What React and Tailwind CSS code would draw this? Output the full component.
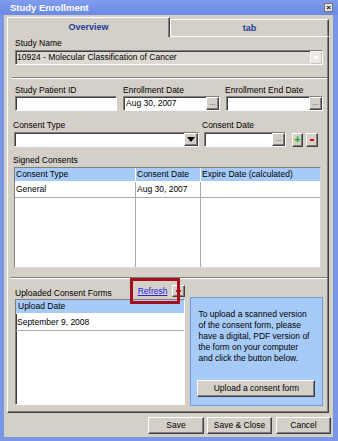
import React from 'react';

const raised =
  'bg-[#d4d0c8] border border-t-white border-l-white border-r-[#404040] border-b-[#404040] shadow-[inset_-1px_-1px_0_#808080]';
const sunken =
  'border border-t-[#808080] border-l-[#808080] border-r-white border-b-white shadow-[inset_1px_1px_0_#404040]';

const DotsButton = () => (
  <div className={`${raised} w-[13px] h-full flex items-center justify-center text-[7px] text-[#333]`}>
    <span className="-mt-[3px]">...</span>
  </div>
);

const DateField = ({ value, className = '' }) => (
  <div className={`${sunken} h-[15px] bg-white flex items-stretch ${className}`}>
    <div className="flex-1 flex items-center pl-[2px]">{value}</div>
    <DotsButton />
  </div>
);

const Label = ({ children, className = '' }) => (
  <div className={`flex items-center ${className}`}>{children}</div>
);

const Separator = ({ className = '' }) => (
  <div className={`h-[2px] border-t border-[#808080] border-b border-b-white ${className}`} />
);

const Button = ({ children, className = '' }) => (
  <div className={`${raised} h-[17px] flex items-center justify-center ${className}`}>{children}</div>
);

const SignedConsents = () => {
  const cols = 'grid grid-cols-[121px_65px_1fr]';
  return (
    <div className="-ml-[1px] w-[307px] h-[101px] bg-white border border-[#808080] border-r-[#d8d8d8] border-b-[#d8d8d8] flex flex-col">
      <div className={`${cols} h-[14px] bg-[#a6cbf8] border-b border-white`}>
        <div className="flex items-center pl-[1px] border-r border-white">Consent Type</div>
        <div className="flex items-center pl-[1px] border-r border-white">Consent Date</div>
        <div className="flex items-center pl-[1px]">Expire Date (calculated)</div>
      </div>
      <div className={`${cols} h-[16px] border-b border-[#a8a8a8]`}>
        <div className="flex items-center pl-[1px] border-r border-[#a8a8a8]">General</div>
        <div className="flex items-center pl-[1px] border-r border-[#a8a8a8]">Aug 30, 2007</div>
        <div />
      </div>
      <div className={`${cols} flex-1`}>
        <div className="border-r border-[#a8a8a8]" />
        <div className="border-r border-[#a8a8a8]" />
        <div />
      </div>
    </div>
  );
};

const UploadedForms = () => (
  <div className="relative flex">
    <div className="w-[171px] flex flex-col">
      <div className="h-[20px] flex items-end">
        <span className="pb-[2px]">Uploaded Consent Forms</span>
        <div className="ml-auto flex items-center gap-[5px] mb-[2px]">
          <span className="text-[#2424e0] underline font-['Liberation_Sans',Arial,sans-serif]">Refresh</span>
          <div className={`${raised} w-[13px] h-[12px] flex items-center justify-center`}>
            <div className="w-[5px] h-[2px] bg-[#e01010]" />
          </div>
        </div>
      </div>
      <div className={`${sunken} h-[106px] bg-white flex flex-col`}>
        <div className="h-[14px] bg-[#a6cbf8] flex items-center pl-[2px] border-b border-white">Upload Date</div>
        <div className="h-[17px] flex items-center pl-[1px] border-b border-[#a8a8a8]">September 9, 2008</div>
      </div>
    </div>
    <div className="ml-[5px] mt-[18px] w-[133px] h-[109px] bg-[#a6cbf8] border border-[#6f9ce0] flex flex-col">
      <div className="pt-[11px] pl-[7px] leading-[11px]">
        <div>To upload a scanned version</div>
        <div>of the consent form, please</div>
        <div>have a digital, PDF version of</div>
        <div>the form on your computer</div>
        <div>and click the button below.</div>
      </div>
      <Button className="mt-auto mb-[8px] ml-[6px] w-[118px] h-[16px]">Upload a consent form</Button>
    </div>
    <div className="absolute left-[115px] -top-[1px] w-[50px] h-[26px] border-[3px] border-[#a50f1d]" />
  </div>
);

export default function App() {
  return (
    <div className="w-[338px] h-[441px] bg-[#7a96e6] flex flex-col font-['Liberation_Sans',Arial,sans-serif] text-[8.5px] leading-none text-black">
      <div className="h-[15px] flex items-center justify-between pl-[10px] pr-[5px] bg-gradient-to-b from-[#7f9cf0] to-[#6a8ae4]">
        <span className="text-white font-bold text-[9.5px]">Study Enrollment</span>
        <div className="w-[9px] h-[9px] bg-[#e8e8e8] border border-[#707070] flex items-center justify-center text-[8px] font-bold">
          ×
        </div>
      </div>

      <div className="flex-1 ml-[4px] mr-[5px] mb-[4px] bg-[#d4d0c8] flex flex-col pl-[3px] pr-[2px] pt-[2px]">
        <div className="w-[322px] h-[19px] flex items-end">
          <div className="relative z-10 w-[163px] h-[20px] -mb-[1px] bg-[#d4d0c8] border-t border-l border-white border-r border-r-[#404040] shadow-[inset_-1px_0_0_#808080] flex items-center justify-center font-bold text-[9px] text-[#1d3c9b]">
            Overview
          </div>
          <div className="flex-1 h-[17px] bg-[#d4d0c8] border-t border-l border-white border-r border-r-[#404040] shadow-[inset_-1px_0_0_#808080] flex items-center justify-center font-bold text-[9px] text-[#1d3c9b]">
            tab
          </div>
        </div>

        <div className="w-[322px] h-[377px] border border-t-white border-l-white border-r-[#404040] border-b-[#404040] shadow-[inset_-1px_-1px_0_#808080] pl-[7px] pr-[5px] flex flex-col">
          <Label className="h-[13px]">Study Name</Label>
          <div className={`${sunken} h-[15px] bg-[#dcd9d2] flex items-stretch`}>
            <div className="flex-1 flex items-center pl-[1px]">10924 - Molecular Classification of Cancer</div>
            <div className="w-[12px] bg-[#ebe9e5] border border-[#f4f4f4] border-r-[#c8c5be] border-b-[#c8c5be] flex items-center justify-center">
              <div className="w-0 h-0 border-l-[3px] border-r-[3px] border-t-[4px] border-l-transparent border-r-transparent border-t-white" />
            </div>
          </div>

          <Separator className="mt-[12px] -ml-[3px] -mr-[4px]" />

          <div className="mt-[5px] flex h-[12px]">
            <Label className="w-[108px]">Study Patient ID</Label>
            <Label className="w-[102px]">Enrollment Date</Label>
            <Label>Enrollment End Date</Label>
          </div>
          <div className="flex h-[15px]">
            <div className={`${sunken} w-[102px] bg-white`} />
            <DateField value="Aug 30, 2007" className="ml-[6px] w-[97px]" />
            <DateField value="" className="ml-[6px] w-[97px]" />
          </div>

          <div className="mt-[8px] flex h-[13px]">
            <Label className="w-[189px] -ml-[2px]">Consent Type</Label>
            <Label>Consent Date</Label>
          </div>
          <div className="flex h-[15px] items-center">
            <div className={`${sunken} -ml-[1px] w-[185px] h-[15px] bg-white flex items-stretch`}>
              <div className="flex-1" />
              <div className={`${raised} w-[14px] flex items-center justify-center`}>
                <div className="w-0 h-0 border-l-[4px] border-r-[4px] border-t-[5px] border-l-transparent border-r-transparent border-t-black" />
              </div>
            </div>
            <DateField value="" className="ml-[5px] w-[82px]" />
            <div className={`${raised} ml-[6px] w-[11px] h-[14px] flex items-center justify-center text-[11px] font-bold text-[#10b010]`}>
              +
            </div>
            <div className={`${raised} ml-[3px] w-[12px] h-[14px] flex items-center justify-center`}>
              <div className="w-[4px] h-[2px] bg-[#e01010]" />
            </div>
          </div>

          <Label className="mt-[6px] h-[14px] -ml-[2px]">Signed Consents</Label>
          <SignedConsents />

          <Separator className="mt-[9px] -ml-[5px] -mr-[4px]" />

          <UploadedForms />
        </div>

        <div className="mt-[4px] flex justify-end">
          <Button className="w-[56px]">Save</Button>
          <Button className="ml-[3px] w-[65px]">Save &amp; Close</Button>
          <Button className="ml-[4px] w-[55px]">Cancel</Button>
        </div>
      </div>
    </div>
  );
}
